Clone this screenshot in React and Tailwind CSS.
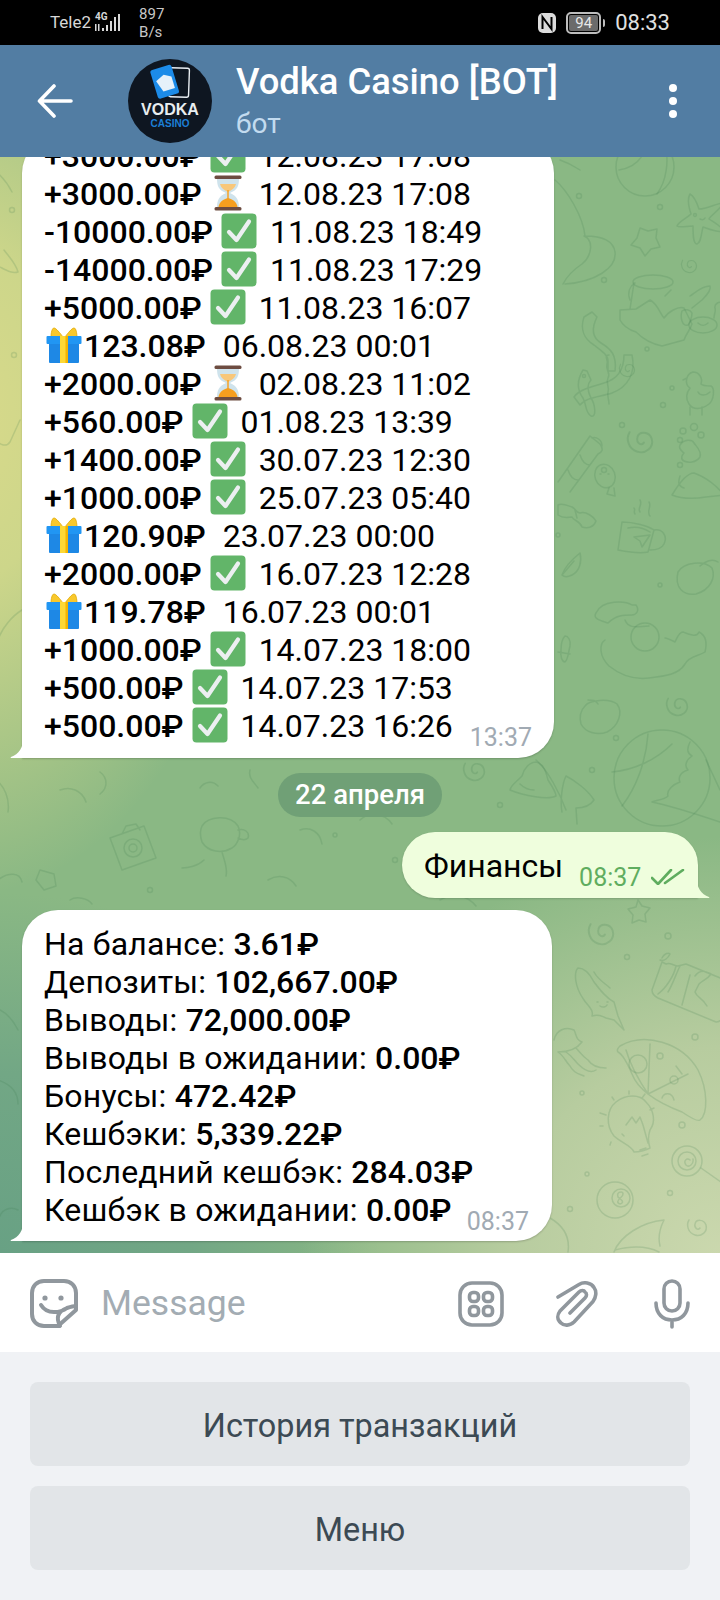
import React from "react";

const CheckEmoji = () => (
  <svg viewBox="0 0 36 36" className="inline-block w-[36px] h-[36px] align-[-6px]">
    <rect x="0.5" y="0.5" width="35" height="35" rx="4" fill="#62b569" />
    <path d="M8 19l7.5 8L28 8.5" fill="none" stroke="#eceff1" strokeWidth="4.2" strokeLinecap="round" strokeLinejoin="round" />
  </svg>
);

const HourglassEmoji = () => (
  <svg viewBox="0 0 36 36" className="inline-block w-[36px] h-[36px] align-[-6px]">
    <path d="M7 3c0 9 2 12 9 15C9 21 7 25 7 33h22c0-8-2-12-9-15 7-3 9-6 9-15z" fill="#cfe3ec" />
    <path d="M10 9h16c-1 4-4 6-8 8-4-2-7-4-8-8z" fill="#f8c77a" />
    <path d="M8.5 32c.5-5 5-8 9.5-9 4.500 1 9 4 9.500 9z" fill="#f59e1f" />
    <rect x="17.300" y="15" width="1.400" height="10" fill="#f59e1f" />
    <rect x="4.500" y="0.500" width="27" height="3.500" rx="1.500" fill="#6d4c41" />
    <rect x="4.500" y="32" width="27" height="3.500" rx="1.500" fill="#6d4c41" />
  </svg>
);

const GiftEmoji = () => (
  <svg viewBox="0 0 36 36" className="inline-block w-[36px] h-[36px] align-[-6px]">
    <path d="M17 10C14 6 10 1 8 1 6 1 5 6 5 10zM19 10c3-4 7-9 9-9 2 0 3 5 3 10z" fill="#f9c82b" stroke="#e0a800" strokeWidth="0.800" />
    <rect x="3" y="15" width="30" height="21" rx="1" fill="#1e88e5" />
    <rect x="0.500" y="9" width="35" height="8" rx="1" fill="#2196f3" />
    <rect x="14" y="9" width="8" height="27" fill="#fdd835" />
    <rect x="19.500" y="9" width="2.500" height="27" fill="#f4b400" />
  </svg>
);

const rows = [
  { amount: "+3000.00₽", icon: "check", date: "12.08.23 17:08" },
  { amount: "+3000.00₽", icon: "wait", date: "12.08.23 17:08" },
  { amount: "-10000.00₽", icon: "check", date: "11.08.23 18:49" },
  { amount: "-14000.00₽", icon: "check", date: "11.08.23 17:29" },
  { amount: "+5000.00₽", icon: "check", date: "11.08.23 16:07" },
  { amount: "123.08₽", icon: "gift", date: "06.08.23 00:01" },
  { amount: "+2000.00₽", icon: "wait", date: "02.08.23 11:02" },
  { amount: "+560.00₽", icon: "check", date: "01.08.23 13:39" },
  { amount: "+1400.00₽", icon: "check", date: "30.07.23 12:30" },
  { amount: "+1000.00₽", icon: "check", date: "25.07.23 05:40" },
  { amount: "120.90₽", icon: "gift", date: "23.07.23 00:00" },
  { amount: "+2000.00₽", icon: "check", date: "16.07.23 12:28" },
  { amount: "119.78₽", icon: "gift", date: "16.07.23 00:01" },
  { amount: "+1000.00₽", icon: "check", date: "14.07.23 18:00" },
  { amount: "+500.00₽", icon: "check", date: "14.07.23 17:53" },
  { amount: "+500.00₽", icon: "check", date: "14.07.23 16:26" },
];

const finance = [
  ["На балансе: ", "3.61₽"],
  ["Депозиты: ", "102,667.00₽"],
  ["Выводы: ", "72,000.00₽"],
  ["Выводы в ожидании: ", "0.00₽"],
  ["Бонусы: ", "472.42₽"],
  ["Кешбэки: ", "5,339.22₽"],
  ["Последний кешбэк: ", "284.03₽"],
  ["Кешбэк в ожидании: ", "0.00₽"],
];

const TxRow = ({ row }) => {
  if (row.icon === "gift") {
    return (
      <div className="h-[38px] leading-[38px] whitespace-pre">
        <span className="ml-[2px] mr-[2px]"><GiftEmoji /></span>
        <span className="font-medium">{row.amount}</span>
        <span className="ml-[1px]">{"  " + row.date}</span>
      </div>
    );
  }
  return (
    <div className="h-[38px] leading-[38px] whitespace-pre">
      <span className="font-medium">{row.amount}</span>
      {" "}
      {row.icon === "check" ? <CheckEmoji /> : <HourglassEmoji />}
      <span className="ml-[5px]">{" " + row.date}</span>
    </div>
  );
};

const Tail = ({ className, fill, flip }) => (
  <svg viewBox="0 0 14 22" className={className}>
    {flip ? (
      <path d="M0 0C1 12 5 18 13 21c.6.400.3 1-.4 1H0z" fill={fill} />
    ) : (
      <path d="M14 0C13 12 9 18 1 21c-.6.400-.3 1 .4 1H14z" fill={fill} />
    )}
  </svg>
);

// chat wallpaper doodles, page coordinates
const circles = [
  [579, 196, 2.500], [660, 207, 2.500], [604, 280, 2.500], [647, 349, 2], [584, 376, 1.500], [672, 388, 2], [663, 405, 2.500], [622, 425, 2.500],
  [604, 470, 2.500], [680, 465, 2.500], [558, 535, 2], [660, 585, 2], [616, 738, 2.500], [592, 770, 2.500], [500, 805, 2.500], [668, 936, 3],
  [627, 957, 2.500], [695, 1037, 3], [582, 1093, 2], [682, 1125, 3], [587, 1174, 2], [670, 1193, 2.500], [570, 1209, 2.500], [150, 890, 2.500],
  [12, 210, 2.500], [14, 355, 2.500], [395, 860, 2.500], [335, 835, 2],
];

const spirals = [
  [689, 265, 0.800], [640, 440, 1.300], [627, 369, 0.800], [677, 705, 1.100], [601, 932, 1.300], [697, 1226, 1], [474, 770, 1.100],
];

const Doodles = () => (
  <svg viewBox="0 157 720 1096" className="absolute inset-0 w-full h-full" fill="none" stroke="#3f7a50" strokeOpacity="0.18" strokeWidth="1.500" strokeLinecap="round" strokeLinejoin="round">
    {circles.map(([x, y, r], i) => <circle key={i} cx={x} cy={y} r={r} />)}
    {spirals.map(([x, y, s], i) => (
      <path key={i} transform={`translate(${x} ${y}) scale(${s})`} d="M3 2c-2 3-6 0-5-4 1-5 9-5 11 1 2 7-5 12-11 10-7-2-9-10-6-15" />
    ))}
    {/* ball */}
    <circle cx="645" cy="167" r="29" />
    <path d="M619 170c12-2 20-8 24-16M665 146c4 14 2 34-8 48" />
    {/* witch hat */}
    <path d="M555 180c12 10 28 36 30 56 12 0 28 2 30 16 2 16-20 30-50 32M584 236c10 4 8 20-2 28-6 4-14 10-19 20M560 160c6 2 14 6 20 10" />
    {/* stars */}
    <path d="M640 228l8 3 9-2-1 9 4 9-9 2-6 7-5-8-9-3 6-7z" />
    <path d="M690 194c4 2 7 9 9 15 8 0 18-6 24-6-2 6-12 12-14 16 6 4 14 8 14 12-6 2-14-2-20-4-2 8-2 16-6 17-4 0-4-10-4-18-6 0-14 2-16 0 2-5 10-8 14-12-2-6-4-15-1-20z" />
    <circle cx="695" cy="215" r="1.400" /><path d="M700 219c2 1 4 1 5-1" />
    {/* bowl, pillow */}
    <ellipse cx="653" cy="282" rx="20" ry="7" />
    <path d="M634 283l-4 26M671 290l-6 6M630 300c-3-8 0-14 5-17M620 310l16-1 14-9c8 4 10 14 14 18 4-6 14-12 20-10l8 16c-2 6-6 10-8 16l-22 6c-10-2-20-8-26-14-8-2-14-8-16-12zM690 296c6-4 12-10 20-10 2 4-4 10-8 14l-10 8" />
    {/* crab */}
    <ellipse cx="703" cy="325" rx="14" ry="8" />
    <path d="M698 323c3 3 7 3 10 0M688 325c-6 2-8-8-6-14 3-2 8-2 10 2 0 4-2 10-4 12M714 318c0-4 2-6 1-10-1-4 5-8 7-4" />
    {/* ribbons */}
    <path d="M592 312l-8 5c-4 12 0 22 10 28 8 6 14 10 14 16v10h7c2-16-4-22-14-28-8-5-10-14-4-26zM609 355c-6 0 0 6-2 9-2 6 4 8 1 14-3 6 2 8 0 14-1 4 1 8 1 12" />
    <path d="M625 355h-1c0 14-6 24-20 28-12 4-24 6-30 14l6 8c6-8 20-8 32-12 16-6 24-20 20-38zM587 371l-4-1c-6 10-6 20 0 28 4 8 2 14 8 18 6 2 4-12 0-18-4-8-4-14 0-18z" />
    {/* duck */}
    <path d="M690 388c-6-4-4-14 3-16 6 0 10 6 8 12 2 2 6 2 10 2 4 2 3 14-2 18-8 6-16 6-20 0-4-6-2-12 1-16zM687 378l-4 2M690 407v8M702 407v8M698 392c2 4 8 4 12 0" />
    {/* paw */}
    <path d="M680 445c4-6 12-6 14-2 2 3 8 8 6 14-4 6-12 6-16 4-4-2-2-6 0-8-2-2-6-4-4-8z" />
    <circle cx="683" cy="431" r="3" /><circle cx="694" cy="427" r="3.500" /><circle cx="701" cy="435" r="3" /><circle cx="680" cy="440" r="2.500" />
    {/* candy stick */}
    <path d="M558 482l32-46 10 8c4 6 2 8-2 10l-28 38M592 438c4-2 10 2 10 8M580 455c2 6 6 10 10 10M568 470c2 6 6 10 10 10" />
    {/* fish */}
    <ellipse cx="605" cy="476" rx="10" ry="12" transform="rotate(-20 605 476)" />
    <path d="M609 488l-2 6 8 2-1-8M600 474h1M608 474h1" />
    {/* wrapper */}
    <path d="M558 505c4-2 8 0 14 2 4 2 4 6 8 6 6-2 14 4 16 8-2 6-8 8-14 6-2-6-8-6-10-10-4 0-8 2-14-2zM575 510l2 8" />
    {/* mug */}
    <path d="M622 522c12 0 26 4 32 8l-6 22c-8 2-20 0-30-2l4-28zM654 530c8-2 14 6 10 14-2 4-8 6-14 6M628 528c8-2 16 0 22 4M634 537l16-2-8 12-2-6zM640 512c-3-4 3-7 0-12M650 516c-4-4 2-10-1-14M635 514c-2-3 1-4-1-6" />
    {/* slice */}
    <path d="M672 495c6-10 14-22 22-22 12 4 24 14 30 22l-18 2c-12 2-24 2-34-2zM680 476c-2 6-2 10 4 12" />
    {/* strawberry */}
    <path d="M678 572c6-10 26-12 34-4 4 10-2 22-16 26-12 2-22-6-18-22zM700 566c4-4 12-8 18-4" />
    {/* leaf */}
    <path d="M562 575c2-6 8-14 18-22 2 8 0 18-8 22-4 2-8 2-10 0zM562 575l12-14" />
    {/* cat */}
    <path d="M632 605c-6-4-30-6-36 8-4 6 6 8 12 10 8-8 16-8 24-8 4 0 8-4 4-10zM605 640c-6 4-6 16 4 26 10 8 24 14 40 12 18-2 30-4 36-14 4-8 14-8 20-12 2-8 2-16-6-20-2 6-10 2-16 0-4 0-6 6-8 10-4-2-8-4-10-4M625 620c4 10 14 6 24 6" />
    <circle cx="645" cy="637" r="14" />
    {/* small candy, apple */}
    <path d="M565 636c3 0 6 4 5 10-2 8-2 14-5 16-3 0-5-6-4-12 0-6 2-12 4-14zM558 652l12 2" />
    <path d="M585 706c4-6 24-8 32-2 6 8 2 22-10 28-10 4-22 0-26-8-2-8 0-14 4-18zM598 704c-2-4-6-4-10-4" />
    {/* big ball, balloon */}
    <circle cx="662" cy="778" r="48" />
    <path d="M612 772c22-2 44-12 60-28M622 806c14-18 24-44 26-72M690 742c-4 8-2 12 2 14-6 4-8 10-4 14-8 2-10 8-8 12-6 2-14 8-12 14-4 4-12 4-16 6 20 4 50 14 68 20M706 760l14 30" />
    {/* bell */}
    <path d="M510 790c0-4 6-8 12-14 2-8 8-14 14-14 8 2 10 10 12 18 4 6 8 12 8 16-8 4-32 0-46-6zM520 784c4 4 8 6 14 6" />
    {/* tree */}
    <path d="M562 812c-2-10 0-28 4-36 8 4 22 14 28 24-4 6-12 8-18 8l1 16M536 760c12 10 24 34 30 50" />
    {/* star under bubble */}
    <path d="M638 900l4 6 8 2-5 6 1 8-7-2-7 3 1-8-5-6 8-2z" />
    {/* squid */}
    <path d="M578 968c-4 4-4 18 6 32 4 6 10 10 8 16 6-2 10 0 14 2l8 2 10 10-6-14-4-14c-8-4-14-12-20-20-4-8-10-14-16-14zM594 972c4 8 12 12 16 16M597 1002h1M607 1002h1M600 1006c3 2 6 1 7-1" />
    {/* jellyfish */}
    <path d="M554 1040c2-10 12-14 20-10 3 6 2 10 8 12-6 8-14 10-24 10M558 1052c6 4 8 10 12 14 4 8 10 8 14 10M566 1052c6 4 8 8 12 12 6 6 12 10 18 6M576 1048c4 4 6 8 12 12 4 6 12 8 18 8" />
    {/* chocolate */}
    <path d="M662 962l-10 28c0 4 2 6 6 8l58 24c4 0 6-2 6-6l8-34-44-18-8 2c-4 0-8-4-12-2zM676 966c-2 10-10 22-18 28M680 966c-4 8-8 20-12 26M690 975l-8 30M695 976c6-8 12-4 16-2-4 6-8 6-12 10l-4 8c2 6 8 6 12 14M662 958c2-4 6-6 8-4-2 4-6 8-10 6" />
    {/* pizza */}
    <path d="M620 1046c24-14 62-4 78 24 10 20 10 44 2 50-2 2-12-4-18-8-26-10-44-22-50-38-6-14-10-20-14-22-2-2 0-4 2-6zM626 1050c4 14 10 26 22 44M650 1044l-2 50 40-20" />
    <circle cx="638" cy="1064" r="9" /><circle cx="660" cy="1056" r="3" /><circle cx="674" cy="1080" r="4" /><path d="M662 1098c2-6 10-6 12 2M676 1066l6 8" />
    {/* bulb */}
    <path d="M634 1152c-2-6-14-10-20-16-8-10-8-26 2-34 10-8 24-8 30 0 8 8 10 20 4 28-2 6-2 12 0 18-4 2-10 4-16 4zM622 1134l2 2M626 1125l6-8 4 6 4-6 3 8 5 18M640 1150l6-2M642 1156l6-2M600 1113l6 2M614 1100l-2-3M629 1094v-3M642 1098l3-4M650 1110l4-2M600 1126h3M611 1142l-1 3" />
    {/* lollipop */}
    <circle cx="687" cy="1161" r="15" /><circle cx="687" cy="1161" r="9" /><path d="M701 1168l20 14M690 1160c-3-3-7 1-4 5 3 3 8-1 7-6" />
    {/* 8 ball */}
    <circle cx="615" cy="1200" r="18" /><circle cx="621" cy="1198" r="9" /><path d="M621 1192c-3 0-4 2-3 5 2 2 6 4 4 6-2 2-5 0-4-2 1-3 5-4 5-7 0-1-1-2-2-2z" />
    {/* fin */}
    <path d="M614 1252c6-16 28-30 50-32-4 8-6 18-4 26M615 1250c16-4 32-4 44 2M550 1218c14 8 20 20 18 34" />
    {/* left strip */}
    <path d="M-6 170c8 6 14 14 18 22M4 250c6 8 12 14 14 22-6 2-12-2-20-6M20 420l-10 22c-4 6-12 2-12-2M22 610c-10 6-20 18-24 30M-4 780c8 6 14 18 12 32M-2 880c10-8 22-8 24 2M0 1010c8 4 14 12 18 20M-2 1080c12 4 20 12 20 24M18 1210c-8-4-16 0-18 6" />
    {/* camera, bird, things between bubbles */}
    <path d="M110 838l34-12 12 32-34 12zM122 834l4-8 10-2 4 6" />
    <circle cx="133" cy="848" r="9" /><circle cx="133" cy="848" r="4" />
    <path d="M202 826c6-10 28-12 36 0 4 8 0 18-6 22-10 6-24 4-30-6-2-6-2-12 0-16zM238 830c6-2 12 2 10 8-2 2-6 2-10 0M222 852c2 8 6 16 4 24M204 860c-6 6-16 8-22 8M60 790c10-4 22 0 26 12M100 772c8 6 8 16 0 22M300 830c10-4 20 2 22 14M268 880c10-6 22-4 28 6M360 820c8-8 24-8 32 4M440 900c14-8 28-4 36 6M500 880l8-8 10 6M200 788c4-6 12-8 18-2M250 770c-2 8 4 12 8 18M40 870l14 4 2 12-12 4-8-10zM70 900c6-4 18-2 22 4" />
  </svg>
);

const Logo = () => (
  <div className="w-[84px] h-[84px] rounded-full bg-[#0e1621] shrink-0 flex flex-col items-center">
    <svg viewBox="0 0 84 42" className="w-[84px] h-[42px] shrink-0">
      <rect x="41" y="9" width="20" height="29" rx="2" fill="none" stroke="#e8edf2" strokeWidth="1.400" transform="rotate(2 51 23)" />
      <g transform="rotate(-17 36 24)">
        <rect x="26" y="8" width="22" height="30" rx="2.500" fill="#1c8be8" />
        <path d="M29 20l9-4 7 4v12H33z" fill="#e6f1fa" />
      </g>
    </svg>
    <div className="font-['Liberation_Sans',sans-serif] font-bold text-[16px] leading-[16px] text-[#e8edf0] mt-[1px]">VODKA</div>
    <div className="font-['Liberation_Sans',sans-serif] font-bold text-[10px] leading-[11px] text-[#1c7fd6]">CASINO</div>
  </div>
);

const StatusBar = () => (
  <div className="h-[45px] bg-black shrink-0 flex items-center pl-[50px] pr-[50px] text-[#d8d8d8]">
    <span className="text-[17px]">Tele2</span>
    <svg viewBox="0 0 34 24" className="w-[34px] h-[24px] ml-[2px]" fill="#d8d8d8">
      <text x="2" y="9" fontSize="10" fontWeight="700" fontFamily="Roboto, sans-serif">4G</text>
      <rect x="2" y="13" width="1.500" height="7" /><rect x="5" y="13" width="1.500" height="7" />
      <rect x="9" y="17" width="2" height="3" /><rect x="13" y="14" width="2" height="6" /><rect x="17" y="10" width="2" height="10" /><rect x="21" y="6" width="2" height="14" /><rect x="25" y="3" width="2" height="17" />
    </svg>
    <div className="ml-[12px] text-[15px] leading-[18px] text-[#c8c8c8]">
      <div>897</div>
      <div>B/s</div>
    </div>
    <div className="ml-auto flex items-center">
      <svg viewBox="0 0 20 22" className="w-[20px] h-[22px]" fill="none">
        <rect x="1" y="1" width="18" height="20" rx="5" fill="#dcdcdc" />
        <path d="M5.500 17V5l9 12V5" stroke="#000" strokeWidth="2" />
      </svg>
      <div className="ml-[9px] w-[35px] h-[22px] rounded-[5px] border-2 border-[#bdbdbd] p-[1px]">
        <div className="h-full rounded-[2px] bg-[#6b6b6b] text-[15px] leading-[16px] text-center text-[#e8e8e8]">94</div>
      </div>
      <div className="w-[2px] h-[8px] bg-[#bdbdbd] ml-[2px] rounded-r-sm" />
      <span className="ml-[10px] text-[22px] text-[#e0e0e0]">08:33</span>
    </div>
  </div>
);

const Header = () => (
  <div className="h-[112px] bg-[#527da3] shrink-0 flex items-center relative z-10">
    <svg viewBox="0 0 36 36" className="w-[36px] h-[36px] ml-[37px]" fill="none" stroke="#fff" strokeWidth="3.600" strokeLinecap="round" strokeLinejoin="round">
      <path d="M34 18H3M17 3L2.500 18 17 33" />
    </svg>
    <div className="ml-[55px]"><Logo /></div>
    <div className="ml-[24px]">
      <div className="text-[36.4px] leading-[44px] font-medium text-white">Vodka Casino [BOT]</div>
      <div className="text-[28px] leading-[36px] text-[#c3dbef] mt-[2px]">бот</div>
    </div>
    <div className="ml-auto mr-[43px] flex flex-col gap-[5px]">
      <div className="w-[8px] h-[8px] rounded-full bg-white" />
      <div className="w-[8px] h-[8px] rounded-full bg-white" />
      <div className="w-[8px] h-[8px] rounded-full bg-white" />
    </div>
  </div>
);

const Chat = () => (
  <div className="flex-1 relative overflow-hidden flex flex-col justify-end pb-[12px] bg-[#8ab884] bg-[radial-gradient(ellipse_300px_480px_at_-40px_260px,#d9da8a_0%,#cdd68a_35%,transparent_100%),radial-gradient(ellipse_420px_420px_at_720px_1100px,#cbd8ae_0%,#b7cc9f_50%,transparent_100%),radial-gradient(ellipse_380px_360px_at_0px_1096px,#68a184_0%,#72a785_50%,transparent_100%)]">
    <Doodles />

    <div className="relative shrink-0 ml-[22px] w-[532px] bg-white rounded-t-[36px] rounded-br-[36px] px-[22px] pb-[13px] text-[32px] text-black shadow-[0_1px_2px_rgba(0,0,0,0.2)]">
      {rows.map((row, i) => <TxRow key={i} row={row} />)}
      <span className="absolute right-[22px] bottom-[6px] text-[25px] leading-[28px] text-[#a1aab3]">13:37</span>
      <Tail className="absolute -left-[12px] bottom-0 w-[14px] h-[22px]" fill="#fff" />
    </div>

    <div className="relative shrink-0 self-center mt-[15px] h-[44px] w-[164px] rounded-full bg-[#70a076] text-white text-[27.5px] font-medium flex items-center justify-center">22 апреля</div>

    <div className="relative shrink-0 self-end mt-[15px] mr-[22px] w-[296px] h-[66px] bg-[#effedd] rounded-t-[34px] rounded-bl-[34px] shadow-[0_1px_2px_rgba(0,0,0,0.15)]">
      <div className="flex items-center h-full pl-[22px] pt-[2px]">
        <span className="text-[32px] text-black">Финансы</span>
        <span className="ml-[16px] mt-[24px] text-[25px] leading-[30px] text-[#5fad5f]">08:37</span>
        <svg viewBox="0 0 34 16" className="w-[34px] h-[16px] ml-[10px] mt-[22px]" fill="none" stroke="#5fad5f" strokeWidth="2.600" strokeLinecap="round" strokeLinejoin="round">
          <path d="M1 9l6 6L20 1M14 14L32 1" />
        </svg>
      </div>
      <Tail className="absolute -right-[12px] bottom-0 w-[14px] h-[22px]" fill="#effedd" flip />
    </div>

    <div className="relative shrink-0 mt-[12px] ml-[22px] w-[530px] bg-white rounded-t-[36px] rounded-br-[36px] pt-[15px] px-[22px] pb-[12px] text-[32px] text-black shadow-[0_1px_2px_rgba(0,0,0,0.2)]">
      {finance.map(([label, value]) => (
        <div key={label} className="h-[38px] leading-[38px] whitespace-pre">
          <span className="tracking-[0.2px]">{label}</span><span className="font-medium">{value}</span>
        </div>
      ))}
      <span className="absolute right-[23px] bottom-[5px] text-[25px] leading-[28px] text-[#a1aab3]">08:37</span>
      <Tail className="absolute -left-[12px] bottom-0 w-[14px] h-[22px]" fill="#fff" />
    </div>
  </div>
);

const InputBar = () => (
  <div className="h-[99px] bg-white shrink-0 flex items-center relative pt-[3px]">
    <svg viewBox="0 0 48 50" className="w-[48px] h-[50px] ml-[30px]" fill="none" stroke="#90979d" strokeWidth="4" strokeLinecap="round" strokeLinejoin="round">
      <path d="M28 47H14C7 47 2 42 2 35V14C2 7 7 2 14 2h20c7 0 12 5 12 12v17L28 47z" />
      <path d="M11 26c3 5 8 7 13 7 5 0 9-1 13-4 3-1 6-2 9-2M30 47c-4-8-3-14 7-18" />
      <circle cx="15" cy="19" r="2.600" fill="#90979d" stroke="none" />
      <circle cx="31" cy="19" r="2.600" fill="#90979d" stroke="none" />
    </svg>
    <span className="ml-[23px] text-[35.5px] text-[#a3acb3]">Message</span>
    <div className="ml-auto flex items-center pr-[30px]">
      <svg viewBox="0 0 46 46" className="w-[46px] h-[46px]" fill="none" stroke="#90979d" strokeWidth="3.600">
        <rect x="2" y="2" width="42" height="42" rx="12" />
        <rect x="11.500" y="11.500" width="9" height="9" rx="3.500" />
        <rect x="25.500" y="11.500" width="9" height="9" rx="3.500" />
        <rect x="11.500" y="25.500" width="9" height="9" rx="3.500" />
        <rect x="25.500" y="25.500" width="9" height="9" rx="3.500" />
      </svg>
      <svg viewBox="0 0 42 46" className="w-[42px] h-[46px] ml-[52px]" fill="none" stroke="#90979d" strokeWidth="3.600" strokeLinecap="round" strokeLinejoin="round">
        <path d="M2 16L23 3.500c5-3 12-2 15 3 3 4 2 10-1 14L18 41c-4 4-10 4-13 1-4-3-4-8-1-12l19-19c2-2 5-2 6 0 2 1 2 4 0 6L14 32" />
      </svg>
      <svg viewBox="0 0 36 50" className="w-[36px] h-[50px] ml-[56px]" fill="none" stroke="#90979d" strokeWidth="3.600" strokeLinecap="round">
        <rect x="10" y="2" width="16" height="30" rx="8" />
        <path d="M2 24c0 11 7 17 16 17s16-6 16-17M18 41v7" />
      </svg>
    </div>
  </div>
);

const KeyboardButton = ({ label }) => (
  <div className="h-[84px] pt-[4px] rounded-[8px] bg-[#e2e5e8] flex items-center justify-center text-[32.4px] text-[#3c4a54]">{label}</div>
);

export default function App() {
  return (
    <div className="w-[720px] h-[1600px] flex flex-col overflow-hidden font-['Roboto',sans-serif]">
      <StatusBar />
      <Header />
      <Chat />
      <InputBar />
      <div className="h-[248px] bg-[#f0f2f5] shrink-0 pt-[30px] px-[30px] flex flex-col gap-[20px]">
        <KeyboardButton label="История транзакций" />
        <KeyboardButton label="Меню" />
      </div>
    </div>
  );
}
